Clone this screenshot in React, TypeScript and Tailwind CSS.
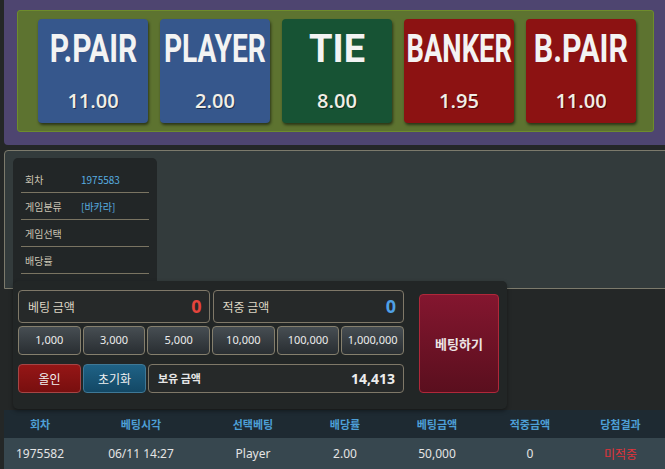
import React from "react";

const cards = [
  { label: "P.PAIR", odds: "11.00", bg: "bg-[#36578c]", fit: "scale-x-[0.79]" },
  { label: "PLAYER", odds: "2.00", bg: "bg-[#36578c]", fit: "scale-x-[0.74]" },
  { label: "TIE", odds: "8.00", bg: "bg-[#175334]", fit: "scale-x-100" },
  { label: "BANKER", odds: "1.95", bg: "bg-[#8c1212]", fit: "scale-x-[0.72]" },
  { label: "B.PAIR", odds: "11.00", bg: "bg-[#8c1212]", fit: "scale-x-[0.8]" },
];

const info = [
  { label: "회차", value: "1975583" },
  { label: "게임분류", value: "[바카라]" },
  { label: "게임선택", value: "" },
  { label: "배당률", value: "" },
];

const chips = ["1,000", "3,000", "5,000", "10,000", "100,000", "1,000,000"];

const headers = ["회차", "베팅시각", "선택베팅", "배당률", "베팅금액", "적중금액", "당첨결과"];

function BetCard({ label, odds, bg, fit }: (typeof cards)[number]) {
  return (
    <div
      className={`${bg} flex h-[104px] w-[110px] flex-col items-center rounded-[4px] shadow-[1px_2px_3px_rgba(0,0,0,0.55)]`}
    >
      <div className="mt-[11px] flex h-[38px] items-center justify-center">
        <span
          className={`${fit} inline-block font-['Roboto',sans-serif] text-[38px] font-bold leading-none whitespace-nowrap text-[#f3f3f3]`}
        >
          {label}
        </span>
      </div>
      <div className="mt-[23px] font-['Open_Sans',sans-serif] text-[20px] font-semibold leading-[20px] text-[#f1eee6] [text-shadow:1px_1px_0_rgba(0,0,0,0.45)]">
        {odds}
      </div>
    </div>
  );
}

export default function App() {
  return (
    <div className="min-h-screen overflow-hidden bg-[#242727] pl-1 font-['Noto_Sans_CJK_KR','Noto_Sans',sans-serif]">
      {/* odds board */}
      <section className="mr-[-6px] h-[145px] rounded-bl-[4px] bg-[#4e4570] pl-[13px] pt-[10px]">
        <div className="flex h-[122px] w-[637px] gap-[12px] rounded-[3px] border border-[#6e8c2c] bg-[#5d7330] pl-[20px] pt-[8px]">
          {cards.map((c) => (
            <BetCard key={c.label} {...c} />
          ))}
        </div>
      </section>

      {/* game info */}
      <section className="mr-[-6px] mt-[5px] h-[139px] rounded-tl-[4px] border border-[#7c7a6c] bg-[#333b3c] pl-[8px] pt-[7px]">
        <div className="h-[131px] w-[144px] rounded-t-[5px] bg-[#222627] px-[8px] pt-[8px]">
          {info.map((r) => (
            <div
              key={r.label}
              className="flex h-[27px] items-center border-b border-[#7a7462] pl-[4px] text-[10px]"
            >
              <span className="w-[56px] text-[#cbc4b3]">{r.label}</span>
              <span className="text-[#58aee0]">{r.value}</span>
            </div>
          ))}
        </div>
      </section>

      {/* betting panel */}
      <section className="relative z-10 ml-[9px] mt-[-8px] flex h-[128px] w-[494px] rounded-[5px] bg-[#222626] pl-[5px] pt-[9px] shadow-[0_2px_4px_rgba(0,0,0,0.4)]">
        <div className="flex w-[386px] flex-col">
          <div className="flex gap-[3px]">
            <div className="flex h-[33px] flex-1 items-center justify-between rounded-[4px] border border-[#7f7868] bg-[#262929] pl-[9px] pr-[7px]">
              <span className="text-[12px] text-[#ddd6c4]">베팅 금액</span>
              <span className="font-['Noto_Sans',sans-serif] text-[18px] font-bold text-[#e5443c]">0</span>
            </div>
            <div className="flex h-[33px] flex-1 items-center justify-between rounded-[4px] border border-[#7f7868] bg-[#262929] pl-[9px] pr-[7px]">
              <span className="text-[12px] text-[#ddd6c4]">적중 금액</span>
              <span className="font-['Noto_Sans',sans-serif] text-[18px] font-bold text-[#4fa0e6]">0</span>
            </div>
          </div>

          <div className="mt-[3px] grid grid-cols-6 gap-[2px]">
            {chips.map((c) => (
              <button
                key={c}
                className="h-[29px] rounded-[4px] border border-[#857f6d] bg-gradient-to-b from-[#474e53] to-[#292e32] font-['Noto_Sans',sans-serif] text-[11px] text-[#ececec]"
              >
                {c}
              </button>
            ))}
          </div>

          <div className="mt-[9px] flex h-[29px] gap-[2px]">
            <button className="w-[63px] rounded-[4px] border border-[#a54545] bg-gradient-to-b from-[#951616] to-[#780f0f] text-[12px] text-[#f1f1f1]">
              올인
            </button>
            <button className="w-[63px] rounded-[4px] border border-[#3f7896] bg-gradient-to-b from-[#1f6286] to-[#134865] text-[12px] text-[#f1f1f1]">
              초기화
            </button>
            <div className="flex flex-1 items-center justify-between rounded-[4px] border border-[#7f7868] bg-[#262929] pl-[9px] pr-[8px]">
              <span className="text-[11px] font-bold text-[#e6e6e6]">보유 금액</span>
              <span className="font-['Noto_Sans',sans-serif] text-[14px] font-bold text-[#ececec]">14,413</span>
            </div>
          </div>
        </div>

        <button className="ml-[15px] mt-[4px] h-[99px] w-[80px] rounded-[4px] border border-[#b0283a] bg-gradient-to-b from-[#84162f] to-[#5a0f1e] text-[13px] font-bold text-[#ece4e4]">
          베팅하기
        </button>
      </section>

      {/* history table */}
      <section className="mt-[1px]">
        <div className="grid h-[28px] grid-cols-[72px_130px_94px_90px_94px_92px_1fr] items-center bg-[#1e2a32] text-center text-[11px] font-bold text-[#4d9fd6]">
          {headers.map((h) => (
            <div key={h}>{h}</div>
          ))}
        </div>
        <div className="grid h-[32px] grid-cols-[72px_130px_94px_90px_94px_92px_1fr] items-center bg-[#37474f] text-center font-['Noto_Sans',sans-serif] text-[12px] text-[#e4e4e4]">
          <div>1975582</div>
          <div>06/11 14:27</div>
          <div>Player</div>
          <div>2.00</div>
          <div>50,000</div>
          <div>0</div>
          <div className="font-['Noto_Sans_CJK_KR',sans-serif] text-[#e0333a]">미적중</div>
        </div>
      </section>
    </div>
  );
}
